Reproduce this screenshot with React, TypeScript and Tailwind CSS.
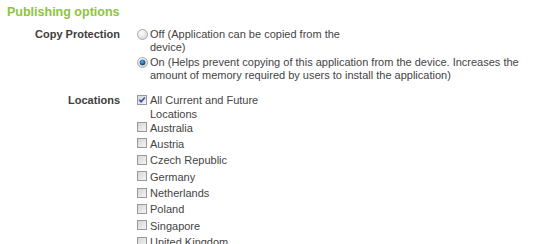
import React from "react";

function Radio({ checked }: { checked?: boolean }) {
  return (
    <svg width="11" height="11" viewBox="0 0 11 11" className="shrink-0">
      <defs>
        <radialGradient id={checked ? "rg1" : "rg0"} cx="0.4" cy="0.35" r="0.7">
          <stop offset="0" stopColor="#ffffff" />
          <stop offset="1" stopColor="#d6d6d6" />
        </radialGradient>
        <radialGradient id="dot" cx="0.4" cy="0.35" r="0.7">
          <stop offset="0" stopColor="#5fb6f0" />
          <stop offset="0.6" stopColor="#1a6fb8" />
          <stop offset="1" stopColor="#0d3f74" />
        </radialGradient>
      </defs>
      <circle cx="5.5" cy="5.5" r="5" fill={`url(#${checked ? "rg1" : "rg0"})`} stroke="#a9a9a9" strokeWidth="1" />
      {checked && <circle cx="5.5" cy="5.5" r="2.6" fill="url(#dot)" stroke="#1b3f66" strokeWidth="0.6" />}
    </svg>
  );
}

function Check({ checked }: { checked?: boolean }) {
  return (
    <svg width="10" height="10" viewBox="0 0 10 10" className="shrink-0">
      <defs>
        <linearGradient id="cb" x1="0" y1="0" x2="1" y2="1">
          <stop offset="0" stopColor="#d4d4d4" />
          <stop offset="1" stopColor="#f6f6f6" />
        </linearGradient>
      </defs>
      <rect x="0.5" y="0.5" width="9" height="9" fill="url(#cb)" stroke="#999999" strokeWidth="1" />
      {checked && (
        <path d="M2.3 4.8 L4.1 6.8 L7.8 2.4" fill="none" stroke="#2a4fa8" strokeWidth="1.6" />
      )}
    </svg>
  );
}

const countries = [
  "Australia",
  "Austria",
  "Czech Republic",
  "Germany",
  "Netherlands",
  "Poland",
  "Singapore",
  "United Kingdom",
];

export default function App() {
  return (
    <div
      className="w-[534px] h-[244px] overflow-hidden bg-white text-[#444] text-[11px] leading-[13px]"
      style={{ fontFamily: '"Liberation Sans", Arial, sans-serif' }}
    >
      <div className="pl-[7px] pt-[4px] text-[12.5px] leading-[16px] font-bold text-[#8dc43d]">
        Publishing options
      </div>

      <div className="flex mt-[7.5px]">
        <div className="w-[120px] text-right font-bold text-[#3d3d3d]">Copy Protection</div>
        <div className="ml-[17px] flex flex-col">
          <div className="flex items-start pb-[2px]">
            <div className="mt-[1.5px]">
              <Radio />
            </div>
            <div className="ml-[2px] whitespace-nowrap">
              Off (Application can be copied from the
              <br />
              device)
            </div>
          </div>
          <div className="flex items-start">
            <div className="mt-[1.5px]">
              <Radio checked />
            </div>
            <div className="ml-[2px] whitespace-nowrap">
              On (Helps prevent copying of this application from the device. Increases the
              <br />
              amount of memory required by users to install the application)
            </div>
          </div>
        </div>
      </div>

      <div className="flex mt-[11px]">
        <div className="w-[120px] text-right font-bold text-[#3d3d3d] leading-[14px]">Locations</div>
        <div className="ml-[17px] flex flex-col">
          <div className="flex items-start h-[29px]">
            <div className="mt-[2px]">
              <Check checked />
            </div>
            <div className="ml-[3px] whitespace-nowrap leading-[14px]">
              All Current and Future
              <br />
              Locations
            </div>
          </div>
          {countries.map((c) => (
            <div key={c} className="flex items-start h-[16.4px]">
              <div className="mt-[0.5px]">
                <Check />
              </div>
              <div className="ml-[3px] whitespace-nowrap">{c}</div>
            </div>
          ))}
        </div>
      </div>
    </div>
  );
}
